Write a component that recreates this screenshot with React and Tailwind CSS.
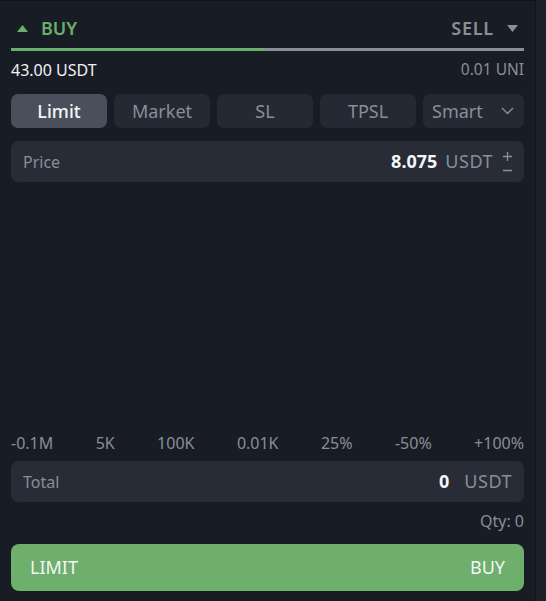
import React from 'react';

const tabs = ['Limit', 'Market', 'SL', 'TPSL'];
const marks = ['-0.1M', '5K', '100K', '0.01K', '25%', '-50%', '+100%'];

export default function App() {
  return (
    <div
      className="flex h-[601px] w-[546px] bg-[#1c2029]"
      style={{ fontFamily: '"Noto Sans", "Open Sans", sans-serif' }}
    >
      <div className="flex w-[536px] flex-col border-r border-t border-[#10131a] bg-[#181c25] px-[11px]">
        {/* Buy / Sell switch */}
        <div className="flex h-[47px] items-start justify-between pt-[17px]">
          <div className="flex h-[20px] items-center gap-[13px] pl-[6px]">
            <svg width="11" height="7" viewBox="0 0 11 7"><path d="M5.5 0L11 7H0z" fill="#6aaf68" /></svg>
            <span className="text-[18px] font-semibold leading-none text-[#6aaf68]">BUY</span>
          </div>
          <div className="flex h-[20px] items-center gap-[13px] pr-[6px]">
            <span className="text-[18px] font-semibold leading-none tracking-[0.8px] text-[#8a8e97]">SELL</span>
            <svg width="11" height="7" viewBox="0 0 11 7"><path d="M0 0H11L5.5 7z" fill="#8a8e97" /></svg>
          </div>
        </div>
        <div className="flex h-[3px]">
          <div className="w-[253px] bg-[#6aaf68]" />
          <div className="flex-1 bg-[#8a8d97]" />
        </div>

        <div className="mt-[9px] flex h-[20px] items-center justify-between">
          <span className="text-[16px] leading-none text-[#f1f3f6]">43.00 USDT</span>
          <span className="text-[15.5px] leading-none text-[#8a8e97]">0.01 UNI</span>
        </div>

        {/* Order type tabs */}
        <div className="mt-[14px] grid h-[34px] grid-cols-[96px_96px_96px_96px_1fr] gap-[7px]">
          {tabs.map((t, i) => (
            <div
              key={t}
              className={`flex items-center justify-center rounded-[7px] text-[18px] ${
                i === 0 ? 'bg-[#4a505b] font-medium text-[#f5f6f8]' : 'bg-[#242933] text-[#8a8e97]'
              }`}
            >
              {t}
            </div>
          ))}
          <div className="flex items-center justify-between rounded-[7px] bg-[#242933] pl-[9px] pr-[10px] text-[18px] text-[#8a8e97]">
            <span>Smart</span>
            <svg width="13" height="8" viewBox="0 0 13 8" fill="none"><path d="M1 1l5.5 5.5L12 1" stroke="#8a8e97" strokeWidth="1.3" /></svg>
          </div>
        </div>

        {/* Price */}
        <div className="mt-[13px] flex h-[41px] items-center rounded-[7px] bg-[#272c37] pl-[12px] pr-[11px]">
          <span className="text-[16px] text-[#8a8e97]">Price</span>
          <span className="ml-auto text-[18px] font-bold text-[#f5f6f8]">8.075</span>
          <span className="ml-[8px] text-[18px] tracking-[0.5px] text-[#8a8e97]">USDT</span>
          <svg className="ml-[9px]" width="11" height="24" viewBox="0 0 11 24" fill="none">
            <path d="M5.5 2v9M1 6.5h9M1 20.5h9" stroke="#8a8e97" strokeWidth="1.3" />
          </svg>
        </div>

        <div className="flex-1" />

        {/* Slider marks */}
        <div className="flex h-[20px] items-center justify-between text-[16px] leading-none text-[#8a8e97]">
          {marks.map((m) => (
            <span key={m}>{m}</span>
          ))}
        </div>

        {/* Total */}
        <div className="mt-[8px] flex h-[41px] items-center rounded-[7px] bg-[#272c37] pl-[12px] pr-[12px]">
          <span className="text-[16px] text-[#8a8e97]">Total</span>
          <span className="ml-auto text-[18px] font-bold text-[#f5f6f8]">0</span>
          <span className="ml-[15px] text-[18px] tracking-[0.5px] text-[#8a8e97]">USDT</span>
        </div>

        <div className="mt-[9px] flex h-[20px] items-center justify-end text-[16px] leading-none text-[#8a8e97]">Qty: 0</div>

        {/* Submit */}
        <button className="mb-[10px] mt-[13px] flex h-[47px] items-center justify-between rounded-[8px] bg-[#6daf6b] px-[19px] text-[18px] text-[#f5f6f8]">
          <span>LIMIT</span>
          <span>BUY</span>
        </button>
      </div>
    </div>
  );
}
